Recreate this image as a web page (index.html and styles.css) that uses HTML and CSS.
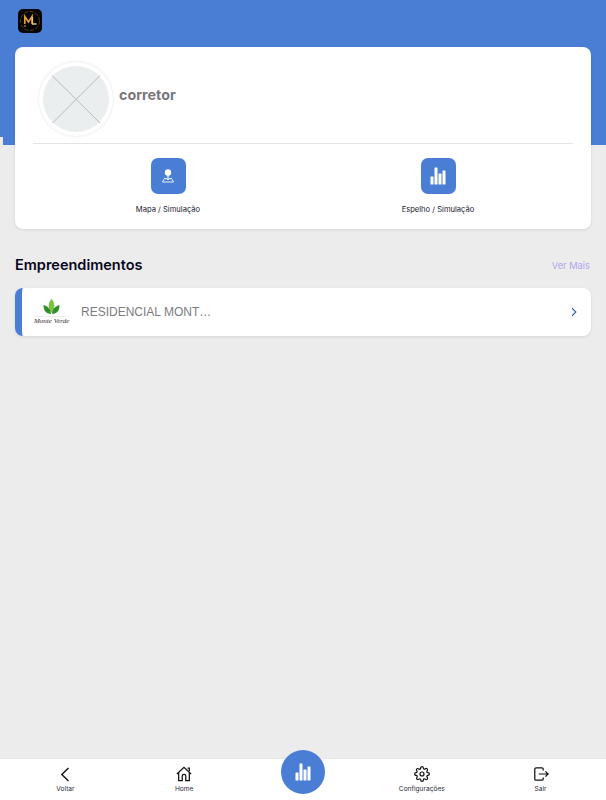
FILE: index.html
```html
<!DOCTYPE html>
<html>
<head>
    <title>Empreendimentos</title>
    <meta name="viewport" content="width=device-width, initial-scale=1">
    <link rel="stylesheet" href="styles.css">
</head>
<body>
    <header class="topbar">
        <div class="app-logo">
            <svg width="24" height="24" viewBox="0 0 24 24">
                <rect width="24" height="24" rx="5" fill="#050403"/>
                <circle cx="12" cy="12" r="9.500" fill="none" stroke="#6b4a1f" stroke-width="0.800" stroke-dasharray="4 1.500"/>
                <path d="M6.800 15V7.500L10.500 13L14 7.500V15" fill="none" stroke="#e09a3c" stroke-width="1.700"/>
                <path d="M14.500 8V15H18.500" fill="none" stroke="#e8c08a" stroke-width="1.300"/>
                <rect x="6" y="16.500" width="2" height="1" fill="#e09a3c"/>
            </svg>
        </div>
        <div class="topbar-notch"></div>
    </header>

    <main class="content">
        <section class="profile-card">
            <div class="profile-row">
                <div class="avatar">
                    <svg width="66" height="66" viewBox="0 0 66 66">
                        <circle cx="33" cy="33" r="33" fill="#ebeeef"/>
                        <path d="M9 9.500L57 57M57 9.500L9.500 57" stroke="#a9acad" stroke-width="0.800" fill="none"/>
                    </svg>
                </div>
                <span class="profile-name">corretor</span>
            </div>
            <div class="profile-actions">
                <a class="action">
                    <span class="action-icon">
                        <svg width="16" height="16" viewBox="0 0 16 16" fill="#fff">
                            <circle cx="8" cy="4.500" r="3.200"/>
                            <rect x="7.400" y="7" width="1.200" height="4.500"/>
                            <path d="M4.500 10.500H6.500L7 11.500H9L9.500 10.500H11.500L13.500 14H2.500Z" fill="none" stroke="#fff" stroke-width="0.900"/>
                        </svg>
                    </span>
                    <span class="action-label">Mapa / Simulação</span>
                </a>
                <a class="action">
                    <span class="action-icon">
                        <svg width="16" height="18" viewBox="0 0 16 18" fill="#fff">
                            <rect x="0.500" y="9.500" width="3" height="8" rx="0.500"/>
                            <rect x="4.500" y="0.500" width="3" height="17" rx="0.500"/>
                            <rect x="8.500" y="6.500" width="3" height="11" rx="0.500"/>
                            <rect x="12.500" y="3.500" width="3" height="14" rx="0.500"/>
                        </svg>
                    </span>
                    <span class="action-label">Espelho / Simulação</span>
                </a>
            </div>
        </section>

        <div class="section-head">
            <h2>Empreendimentos</h2>
            <a class="see-more">Ver Mais</a>
        </div>

        <a class="project-row">
            <span class="project-logo">
                <svg width="38" height="18" viewBox="0 0 38 18">
                    <path d="M18.500 0C14.500 4 15 10 18.500 14C22 10 22.500 4 18.500 0Z" fill="#7cc142"/>
                    <path d="M10.500 6C10.500 11.500 13 15 18 15C17.500 10 15 7 10.500 6Z" fill="#2f8f2c"/>
                    <path d="M26.500 6C26.500 11.500 24 15 19 15C19.500 10 22 7 26.500 6Z" fill="#2f8f2c"/>
                    <path d="M0 17.500H36" stroke="#ddd" stroke-width="0.500"/>
                </svg>
                <span class="project-logo-name">Monte Verde</span>
            </span>
            <span class="project-name">RESIDENCIAL MONT…</span>
            <svg class="project-arrow" width="6" height="10" viewBox="0 0 6 10">
                <path d="M1 1.200L4.800 5L1 8.800" fill="none" stroke="#2f5fc4" stroke-width="1.200"/>
            </svg>
        </a>
    </main>

    <nav class="tabbar">
        <a class="tab">
            <svg width="16" height="16" viewBox="0 0 16 16">
                <path d="M11.500 2L4.800 8.500L11.500 15" fill="none" stroke="#111" stroke-width="1.400"/>
            </svg>
            <span>Voltar</span>
        </a>
        <a class="tab">
            <svg width="16" height="16" viewBox="0 0 18 18" fill="none" stroke="#111" stroke-width="1.400">
                <path d="M1 9L9 1.500L17 9"/>
                <path d="M3 7.500V16.500H7V11.500A2 2 0 0 1 11 11.500V16.500H15V7.500"/>
                <path d="M13 2.500H15V6"/>
            </svg>
            <span>Home</span>
        </a>
        <a class="tab tab-center">
            <span class="tab-center-btn">
                <svg width="16" height="18" viewBox="0 0 16 18" fill="#fff">
                    <rect x="0.500" y="9.500" width="3" height="8" rx="0.500"/>
                    <rect x="4.500" y="0.500" width="3" height="17" rx="0.500"/>
                    <rect x="8.500" y="6.500" width="3" height="11" rx="0.500"/>
                    <rect x="12.500" y="3.500" width="3" height="14" rx="0.500"/>
                </svg>
            </span>
        </a>
        <a class="tab">
            <svg width="16" height="16" viewBox="0 0 24 24" fill="none" stroke="#111" stroke-width="1.800">
                <circle cx="12" cy="12" r="3"/>
                <path d="M19.400 15a1.650 1.650 0 0 0 .33 1.820l.06.06a2 2 0 1 1-2.830 2.830l-.06-.06a1.650 1.650 0 0 0-1.820-.33 1.650 1.650 0 0 0-1 1.510V21a2 2 0 0 1-4 0v-.09a1.650 1.650 0 0 0-1-1.510 1.650 1.650 0 0 0-1.820.33l-.06.06a2 2 0 1 1-2.830-2.830l.06-.06a1.650 1.650 0 0 0 .33-1.820 1.650 1.650 0 0 0-1.510-1H3a2 2 0 0 1 0-4h.09a1.650 1.650 0 0 0 1.510-1 1.650 1.650 0 0 0-.33-1.820l-.06-.06a2 2 0 1 1 2.830-2.830l.06.06a1.650 1.650 0 0 0 1.820.33h.08a1.650 1.650 0 0 0 1-1.510V3a2 2 0 0 1 4 0v.09a1.650 1.650 0 0 0 1 1.510 1.650 1.650 0 0 0 1.820-.33l.06-.06a2 2 0 1 1 2.830 2.830l-.06.06a1.650 1.650 0 0 0-.33 1.820v.08a1.650 1.650 0 0 0 1.510 1H21a2 2 0 0 1 0 4h-.09a1.650 1.650 0 0 0-1.510 1z"/>
            </svg>
            <span>Configurações</span>
        </a>
        <a class="tab">
            <svg width="16" height="16" viewBox="0 0 18 18" fill="none" stroke="#111" stroke-width="1.400">
                <path d="M11.500 5V3.500A1.500 1.500 0 0 0 10 2H3.500A1.500 1.500 0 0 0 2 3.500V14.500A1.500 1.500 0 0 0 3.500 16H10A1.500 1.500 0 0 0 11.500 14.500V13"/>
                <path d="M6.500 9H17M14 6L17 9L14 12"/>
            </svg>
            <span>Sair</span>
        </a>
    </nav>
</body>
</html>
```

FILE: styles.css
```css
* {
    box-sizing: border-box;
}

html, body {
    height: 100%;
}

body {
    display: flex;
    flex-direction: column;
    margin: 0;
    overflow: hidden;
    background-color: #ececed;
    color: #0b0b1a;
    font-family: Inter, "Liberation Sans", sans-serif;
}

.topbar {
    display: flex;
    flex-direction: column;
    justify-content: space-between;
    height: 145px;
    padding-top: 9px;
    background-color: #4a7dd4;
}

.app-logo {
    display: flex;
    margin-left: 18px;
}

.topbar-notch {
    width: 3px;
    height: 8px;
    background-color: #ececed;
}

.content {
    flex: 1;
    margin-top: -98px;
    padding: 0 15px;
}

.profile-card {
    height: 182px;
    padding: 0 18px;
    background-color: #fff;
    border-radius: 8px;
    box-shadow: 0 1px 3px rgba(0, 0, 0, 0.1);
}

.profile-row {
    display: flex;
    align-items: center;
    gap: 6px;
    height: 97px;
    padding: 8px 0 1px 6px;
    border-bottom: 1px solid #e3e3e8;
}

.avatar {
    display: flex;
    padding: 4px;
    background-color: #fff;
    border-radius: 50%;
    box-shadow: 0 0 3px rgba(0, 0, 0, 0.12);
}

.profile-name {
    margin-bottom: 9px;
    color: #77777b;
    font-size: 14.300px;
    font-weight: 700;
}

.profile-actions {
    display: grid;
    grid-template-columns: 270px 270px;
    padding-top: 14px;
}

.action {
    display: flex;
    flex-direction: column;
    align-items: center;
    gap: 11px;
}

.action-icon {
    display: flex;
    align-items: center;
    justify-content: center;
    width: 35px;
    height: 36px;
    background-color: #4a7dd4;
    border-radius: 7px;
}

.action-label {
    color: #1a1a30;
    font-size: 7.600px;
    line-height: 10px;
}

.section-head {
    display: flex;
    align-items: center;
    justify-content: space-between;
    margin-top: 27px;
    padding-right: 1px;
}

.section-head h2 {
    margin: 0;
    color: #07071a;
    font-size: 14.500px;
    font-weight: 600;
    line-height: 18px;
}

.see-more {
    color: #b0a6ee;
    font-size: 9.300px;
}

.project-row {
    display: flex;
    align-items: center;
    height: 48px;
    margin-top: 14px;
    padding-right: 14px;
    background-color: #fff;
    border-left: 7px solid #4a7dd4;
    border-radius: 8px;
    box-shadow: 0 1px 3px rgba(0, 0, 0, 0.1);
}

.project-logo {
    display: flex;
    flex-direction: column;
    width: 38px;
    margin-left: 11px;
}

.project-logo svg {
    display: block;
}

.project-logo-name {
    margin-left: 1px;
    color: #333;
    font-family: "Liberation Serif", serif;
    font-size: 7px;
    font-style: italic;
    line-height: 9px;
    white-space: nowrap;
}

.project-name {
    flex: 1;
    margin-left: 10px;
    color: #7c7c80;
    font-family: "Liberation Sans", sans-serif;
    font-size: 12px;
}

.tabbar {
    display: grid;
    grid-template-columns: repeat(5, 1fr);
    height: 42px;
    padding: 0 6px;
    background-color: #fff;
    border-top: 1px solid #e6e6ec;
}

.tab {
    display: flex;
    flex-direction: column;
    align-items: center;
    gap: 3px;
    padding-top: 7px;
    color: #2a2a38;
    font-size: 6.600px;
    line-height: 9px;
}

.tab-center {
    padding-top: 0;
}

.tab-center-btn {
    display: flex;
    align-items: center;
    justify-content: center;
    width: 44px;
    height: 44px;
    margin-top: -9px;
    background-color: #4a7dd4;
    border-radius: 50%;
}
```
